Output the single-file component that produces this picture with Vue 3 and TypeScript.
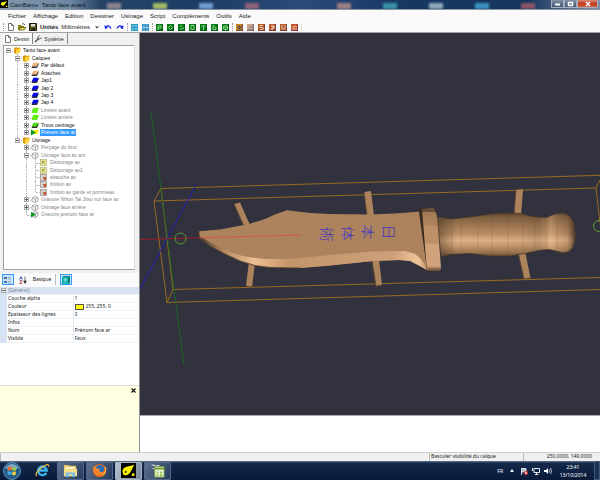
<script setup lang="ts">
import { ref } from 'vue'

interface TreeRow {
  label: string
  level: number
  icon: 'folder' | 'layer' | 'box' | 'contour' | 'mill' | 'engrave' | 'active'
  color?: string
  open?: boolean
  leaf?: boolean
  dim?: boolean
  last?: boolean
  lines?: number[]
}

const menus = ['Fichier', 'Affichage', 'Edition', 'Dessiner', 'Usinage', 'Script', 'Compléments', 'Outils', 'Aide']

const rows: TreeRow[] = [
  { label: 'Tanto face avant', level: 0, icon: 'folder', open: true, last: true },
  { label: 'Calques', level: 1, icon: 'folder', open: true },
  { label: 'Par défaut', level: 2, icon: 'layer', color: '#f0b580', lines: [2] },
  { label: 'Attaches', level: 2, icon: 'layer', color: '#f0b580', lines: [2] },
  { label: 'Jap1', level: 2, icon: 'layer', color: '#0808f0', lines: [2] },
  { label: 'Jap 2', level: 2, icon: 'layer', color: '#0808f0', lines: [2] },
  { label: 'Jap 3', level: 2, icon: 'layer', color: '#0808f0', lines: [2] },
  { label: 'Jap 4', level: 2, icon: 'layer', color: '#0808f0', lines: [2] },
  { label: 'Limites avant', level: 2, icon: 'layer', color: '#62ee18', dim: true, lines: [2] },
  { label: 'Limites arrière', level: 2, icon: 'layer', color: '#62ee18', dim: true, lines: [2] },
  { label: 'Trous centrage', level: 2, icon: 'layer', color: '#52dc1c', lines: [2] },
  { label: 'Prénom face ar', level: 2, icon: 'active', lines: [2], last: true },
  { label: 'Usinage', level: 1, icon: 'folder', open: true, last: true },
  { label: 'Perçage du brut', level: 2, icon: 'box', dim: true },
  { label: 'Usinage face av ant', level: 2, icon: 'box', dim: true, open: true },
  { label: 'Détourage av', level: 3, icon: 'contour', dim: true, leaf: true, lines: [3] },
  { label: 'Détourage av1', level: 3, icon: 'contour', dim: true, leaf: true, lines: [3] },
  { label: 'ebauche av', level: 3, icon: 'mill', dim: true, leaf: true, lines: [3] },
  { label: 'finition av', level: 3, icon: 'mill', dim: true, leaf: true, lines: [3] },
  { label: 'finition av garde et pommeau', level: 3, icon: 'mill', dim: true, leaf: true, last: true, lines: [3] },
  { label: 'Gravure Nihon Tai Jitsu sur face av', level: 2, icon: 'box', dim: true },
  { label: 'Usinage face arrière', level: 2, icon: 'box', dim: true },
  { label: 'Gravure prénom face ar', level: 2, icon: 'engrave', dim: true, leaf: true, last: true },
]
const selected = ref('Prénom face ar')

const properties = ref([
  { id: 'alpha', name: 'Couche alpha', value: '1' },
  { id: 'color', name: 'Couleur', value: '255, 255, 0', swatch: true },
  { id: 'width', name: 'Epaisseur des lignes', value: '0' },
  { id: 'info', name: 'Infos', value: '' },
  { id: 'name', name: 'Nom', value: 'Prénom face ar' },
  { id: 'visible', name: 'Visible', value: 'Faux' },
])

const drawTools = [
  { name: 'Polyligne', d: 'M2 6V2H5V4H2' },
  { name: 'Cercle', d: 'M3.5 1.5L5.5 3.5L3.5 5.5L1.5 3.5Z' },
  { name: 'Points', d: 'M2 2H4M5 3V5M2 5H4' },
  { name: 'Rectangle', d: 'M2 1.5H5V5.5H2Z' },
  { name: 'Texte', d: 'M1.5 2H5.5M3.5 2V6' },
  { name: 'Arc', d: 'M2 1.5V5.5H5L5 4L2 1.5' },
  { name: 'Surface', d: 'M1.5 2.5L3.5 1.5L5.5 2.5V5L3.5 6L1.5 5ZM1.5 2.5L3.5 3.5L5.5 2.5M3.5 3.5V6' },
]
const millTools = [
  { name: 'Contour', bg: '#d48618', d: 'M1 1L6 6M6 1L1 6M3.5 1V6M1 3.5H6', ink: '#62584c' },
  { name: 'Poche', bg: '#c8a48c', d: 'M1 6L6 1V6Z', ink: '#8c8078' },
  { name: 'Perçage', bg: '#b45a28', d: 'M5 1.5H2V3.5H5V5.5H2', ink: '#eec8a8' },
  { name: 'Gravure', bg: '#b85828', d: 'M2 2H5V4H3V6', ink: '#fff0e0' },
  { name: 'Profil 3D', bg: '#b85c30', d: 'M2 1V5H5V1', ink: '#e8c4a0' },
  { name: 'Tournage', bg: '#c4502c', d: 'M1 3H3L4 2L6 3M1 5H6', ink: '#f2d0b8' },
]
</script>

<template>
  <div class="window">
    <header class="titlebar">
      <svg class="app-icon" viewBox="0 0 8 8" aria-hidden="true"><rect width="8" height="8" fill="#000" /><path d="M1 5Q0 2 4 2L7 1L5 4Q4 7 1 5Z" fill="#f6f000" /><circle cx="6.5" cy="6.5" r=".8" fill="#f6f000" /></svg>
      <h1>CamBam+&nbsp; Tanto face avant</h1>
      <div class="glass" aria-hidden="true">
        <i class="g1"></i><i class="g2"></i><i class="g3"></i><i class="g4"></i><i></i><i class="g5"></i><i class="g6"></i><i class="g7"></i><i class="g8"></i><i class="g9"></i>
      </div>
      <div class="caption">
        <button aria-label="Réduire"><svg viewBox="0 0 13 8"><path d="M4 4.500H9" stroke="#fff" stroke-width="2" /></svg></button>
        <button aria-label="Agrandir"><svg viewBox="0 0 13 8"><rect x="4.500" y="2.500" width="4" height="3" fill="none" stroke="#fff" stroke-width="1.500" /></svg></button>
        <button class="close" aria-label="Fermer"><svg viewBox="0 0 20 8"><path d="M8 2L12 6M12 2L8 6" stroke="#fff" stroke-width="1.500" /></svg></button>
      </div>
    </header>

    <nav class="menubar">
      <button v-for="m in menus" :key="m">{{ m }}</button>
    </nav>

    <div class="toolbar">
      <i class="grip"></i>
      <div class="tools file">
        <button aria-label="Nouveau"><svg viewBox="0 0 8 8"><path d="M1.500 .5H4.500L6.500 2.500V7.500H1.500ZM4.500 .5V2.500H6.500" fill="#fff" stroke="#555" stroke-width=".8" /></svg></button>
        <button aria-label="Ouvrir"><svg viewBox="0 0 8 8"><path d="M0 7V2H3L4 3H6V4H8L6 7Z" fill="#8c8410" /><path d="M1 7L2.500 4.500H8L6 7Z" fill="#e8dc58" stroke="#3b3808" stroke-width=".6" /><path d="M4 1Q6 0 7 2" fill="none" stroke="#222" stroke-width=".7" /></svg></button>
        <button aria-label="Enregistrer"><svg viewBox="0 0 8 8"><path d="M.5 .5H7.500V7.500H.5Z" fill="#5c5a18" stroke="#181808" /><rect x="2" y="1" width="4" height="2.500" fill="#ddd" /><rect x="2.500" y="5" width="3.500" height="2.500" fill="#222" /></svg></button>
      </div>
      <label class="units" for="units">Unités</label>
      <div class="combo">
        <select id="units"><option>Millimètres</option><option>Pouces</option></select>
        <svg viewBox="0 0 4 3" aria-hidden="true"><path d="M0 .5H4L2 2.500Z" fill="#333" /></svg>
      </div>
      <div class="tools undo">
        <button aria-label="Annuler"><svg viewBox="0 0 8 8"><path d="M2 4Q4.500 1 7 5.500" fill="none" stroke="#1424e4" stroke-width="1.300" /><path d="M.5 2L1 6L4 5Z" fill="#1424e4" /></svg></button>
        <button aria-label="Rétablir"><svg viewBox="0 0 8 8"><path d="M6 4Q3.500 1 1 5.500" fill="none" stroke="#1424e4" stroke-width="1.300" /><path d="M7.500 2L7 6L4 5Z" fill="#1424e4" /></svg></button>
      </div>
      <i class="grip"></i>
      <div class="tools">
        <button aria-label="Grille"><svg viewBox="0 0 7 7"><rect width="7" height="7" fill="#1490b8" /><path d="M0 2H7M0 5H7M2 0V7M5 0V7" stroke="#b8ecf4" stroke-width=".5" /></svg></button>
        <button aria-label="Accrochage"><svg viewBox="0 0 7 7"><rect width="7" height="7" fill="#2488c0" /><path d="M0 3.500H7M2 0V7M5 0V7" stroke="#d8f2fa" stroke-width=".6" /></svg></button>
      </div>
      <i class="grip"></i>
      <div class="tools">
        <button v-for="t in drawTools" :key="t.name" :aria-label="t.name"><svg viewBox="0 0 7 7"><rect width="7" height="7" fill="#077b18" /><path d="M0 7H7V0" fill="none" stroke="#043c18" /><path :d="t.d" fill="none" stroke="#a8e8a0" stroke-width=".8" /></svg></button>
      </div>
      <i class="grip"></i>
      <div class="tools mill">
        <button v-for="t in millTools" :key="t.name" :aria-label="t.name"><svg viewBox="0 0 7 7"><rect width="7" height="7" :fill="t.bg" /><path d="M0 7H7V0" fill="none" stroke="#3c2448" /><path :d="t.d" fill="none" :stroke="t.ink" stroke-width=".9" /></svg></button>
      </div>
    </div>

    <main class="workspace">
      <aside class="side">
        <div class="tabs" role="tablist">
          <button role="tab" aria-selected="true"><svg viewBox="0 0 8 8"><path d="M1.500 .5H4.500L6.500 2.500V7.500H1.500ZM4.500 .5V2.500H6.500" fill="#fff" stroke="#555" stroke-width=".8" /></svg>Dessin</button>
          <button role="tab" aria-selected="false"><svg viewBox="0 0 8 8"><path d="M1 7L4.500 3.500" stroke="#555" stroke-width="1.500" /><path d="M5.500 .5L4 2V4H6L7.500 2.500" fill="none" stroke="#555" /></svg>Système</button>
        </div>
        <ul class="tree" role="tree">
          <li v-for="row in rows" :key="row.label" role="treeitem" :aria-selected="row.label === selected" :class="{ dim: row.dim }" @click="selected = row.label">
            <i v-for="n in row.level" :key="n" class="guide" :class="{ line: row.lines?.includes(n) }"></i>
            <span class="slot" :class="{ root: row.level === 0, last: row.last }">
              <button v-if="!row.leaf" class="expander" :class="{ open: row.open }" :aria-label="row.open ? 'Replier' : 'Déplier'"></button>
            </span>
            <svg class="node" viewBox="0 0 8 7" aria-hidden="true">
              <template v-if="row.icon === 'folder'"><path d="M1 1L4 0V1L7 .5V5L3 7L1 6Z" fill="#dd9a08" /><path d="M3 2.500L8 1L7 5.500L3 7Z" fill="#ffd43c" /></template>
              <template v-else-if="row.icon === 'layer'"><path d="M2.500 1.500H8L6 6H.5Z" :fill="row.dim ? row.color : '#333'" /><path d="M2.500 .8H7.500L5.600 4.500H.6Z" :fill="row.color" /></template>
              <template v-else-if="row.icon === 'active'"><path d="M3 1H8L6 5H2Z" fill="#f5f000" /><path d="M0 .5L5 3.500L0 6.500Z" fill="#0a9c20" /></template>
              <template v-else-if="row.icon === 'contour'"><rect x=".5" y=".5" width="6" height="6" fill="#e6e48c" stroke="#aaa870" stroke-width=".6" /><path d="M2 2L5 5M5 2Q2 2 2 5" fill="none" stroke="#8b8950" stroke-width=".7" /></template>
              <template v-else-if="row.icon === 'mill'"><rect x=".5" y=".5" width="6" height="6" fill="#d4cecc" stroke="#8a7e7c" stroke-width=".6" /><path d="M3 3H6V6H4Z" fill="#c4562c" /></template>
              <template v-else><path d="M1 2L3.500 .5L7 1.500V5L4.500 6.500L1 5.500ZM1 2L4.500 3L7 1.500M4.500 3V6.500" fill="#f4f4f4" stroke="#929292" stroke-width=".7" /><path v-if="row.icon === 'engrave'" d="M0 1L5 3.500L0 6.500Z" fill="#0a9c20" /></template>
            </svg>
            <span class="label" :class="{ selected: row.label === selected }">{{ row.label }}</span>
          </li>
        </ul>

        <div class="prop-tools">
          <button class="on" aria-label="Par catégorie"><svg viewBox="0 0 8 8"><path d="M0 1H3V3H0ZM0 5H3V7H0Z" fill="#426ca8" /><path d="M4 1.500H7M4 3H7M4 5.500H7M4 7H7" stroke="#7898bc" stroke-width=".7" /></svg></button>
          <button aria-label="Alphabétique"><svg viewBox="0 0 8 8"><path d="M.5 3.500L2 .5L3.500 3.500M1 2.500H3" fill="none" stroke="#3454b8" stroke-width=".8" /><path d="M.5 4.700H3.200L.5 7.500H3.500" fill="none" stroke="#a43838" stroke-width=".8" /><path d="M6 .5V6M4.700 5H7.300L6 7.500Z" fill="#333" stroke="#333" stroke-width=".7" /></svg></button>
          <button class="basic">Basique</button>
          <button class="on help" aria-label="Aide"><svg viewBox="0 0 8 8"><path d="M0 1L2 0H8V7L6 8H0Z" fill="#087c80" /><rect y="1" width="6" height="7" fill="#10b4b0" /><path d="M2 3H4V4.500H3V5.500M3 6.300V7" fill="none" stroke="#e8ffff" stroke-width=".7" /></svg></button>
        </div>
        <table class="props">
          <thead><tr><th class="gutter"><button class="expander open" aria-label="Replier"></button></th><th colspan="2">(Général)</th></tr></thead>
          <tbody>
            <tr v-for="p in properties" :key="p.id">
              <td class="gutter"></td>
              <th scope="row"><label :for="p.id">{{ p.name }}</label></th>
              <td><div class="value"><i v-if="p.swatch" class="swatch"></i><input :id="p.id" v-model="p.value" type="text" /></div></td>
            </tr>
          </tbody>
        </table>
        <div class="hint"><button aria-label="Fermer l'aide"><svg viewBox="0 0 5 5"><path d="M.5 .5L4.500 4.500M4.500 .5L.5 4.500" stroke="#111" stroke-width="1.100" /></svg></button></div>
      </aside>

      <section class="stage">
        <svg class="scene" viewBox="140 33 460 382" preserveAspectRatio="xMidYMid slice" role="img" aria-label="Couteau tanto en 3D">
          <defs>
            <linearGradient id="grip" x1="0" y1="213" x2="0" y2="257" gradientUnits="userSpaceOnUse">
              <stop offset="0" stop-color="#5c4531" /><stop offset=".1" stop-color="#80603f" /><stop offset=".3" stop-color="#a37a55" /><stop offset=".48" stop-color="#bd9067" /><stop offset=".62" stop-color="#e1b386" /><stop offset=".74" stop-color="#ca9b71" /><stop offset=".9" stop-color="#9a734f" /><stop offset="1" stop-color="#57412f" />
            </linearGradient>
            <linearGradient id="shade" x1="437" y1="0" x2="576" y2="0" gradientUnits="userSpaceOnUse">
              <stop offset="0" stop-color="#3c2c1e" stop-opacity=".5" /><stop offset=".14" stop-color="#3c2c1e" stop-opacity="0" /><stop offset=".6" stop-color="#3c2c1e" stop-opacity=".05" /><stop offset=".73" stop-color="#3c2c1e" stop-opacity=".15" /><stop offset=".82" stop-color="#ffd6a8" stop-opacity=".25" /><stop offset=".93" stop-color="#5c4028" stop-opacity=".1" /><stop offset="1" stop-color="#2c2018" stop-opacity=".85" />
            </linearGradient>
            <linearGradient id="bevel" x1="199" y1="0" x2="427" y2="0" gradientUnits="userSpaceOnUse">
              <stop offset="0" stop-color="#49392b" /><stop offset=".12" stop-color="#b98d63" /><stop offset=".24" stop-color="#edbf92" /><stop offset=".4" stop-color="#c39569" /><stop offset=".85" stop-color="#cda078" /><stop offset=".96" stop-color="#f2c69b" /><stop offset="1" stop-color="#c79a70" />
            </linearGradient>
            <linearGradient id="guard" x1="0" y1="208" x2="0" y2="271" gradientUnits="userSpaceOnUse">
              <stop offset="0" stop-color="#66503a" /><stop offset=".06" stop-color="#66503a" /><stop offset=".07" stop-color="#a27a55" /><stop offset=".28" stop-color="#b0865f" /><stop offset=".29" stop-color="#bd9068" /><stop offset=".56" stop-color="#bd9068" /><stop offset=".57" stop-color="#d0a17a" /><stop offset=".92" stop-color="#d0a17a" /><stop offset=".96" stop-color="#967150" /><stop offset="1" stop-color="#604832" />
            </linearGradient>
          </defs>
          <g class="stock">
            <path d="M600 175.300L161 188.500L154 201L596 188L600 180M154 201L167 302.500L600 289.500M161 188.500L173 289.500L600 277.500M173 289.500L167 302.500M596 188L600 223" />
          </g>
          <path class="axis-y" d="M151 112L184 366" />
          <path class="axis-z" d="M196 185L140 289" />
          <g class="tabs-3d">
            <path d="M234 204L240 202.500L250 225L244 227Z" /><path d="M249 261L255 263L252 287L246 286Z" />
            <path d="M364 192L371 191L374 216L367 216Z" /><path d="M372 260L379 259L382 285L376 286.500Z" />
            <path d="M516 190L523 189L521 216L514 216Z" /><path d="M518 251L525 251L530.500 278L524 279.500Z" />
          </g>
          <path class="tab-edge" d="M234 204L244 226M246 286L252 287M364 192L367 215M376 286L382 285M372 261L376 286M516 190L514 213M518 253L524 279L530.500 278" />
          <path d="M199 231.300L220 229.500L249 224L265 219L275 214.500L287 210.200L310 213L330 214L370 214.500L395 213.500L421 211.500L427 270L418 265L410 261L400 260L373 261L330 265.500L300 268L270 267.500L255 265.500L240 261L225 254L210 246L199 238Z" fill="#ac835c" />
          <path d="M199 236L215 245L232 253L245 256.500L265 259L290 259L330 255L373 251.500L405 251L415 254L421 259L426 267L427 270L418 265L410 261L400 260L373 261L330 265.500L300 268L270 267.500L255 265.500L240 261L225 254L210 246L199 238Z" fill="url(#bevel)" />
          <path d="M199 231.300V238L210 246L225 254L240 261L255 265.500L270 267.500L300 268" fill="none" stroke="#4b3927" stroke-width=".8" />
          <path d="M437 217L452 219L470 217L490 214L505 213L520 213.500L535 217L546 217.500L555 214L563 213Q572 215 574 224Q577 236 573 247Q570 253 562 252.500L550 249.500L541 250L525 253.500L510 256L490 256L470 253.500L450 254.500L441 257Z" fill="url(#grip)" />
          <path d="M437 217L452 219L470 217L490 214L505 213L520 213.500L535 217L546 217.500L555 214L563 213Q572 215 574 224Q577 236 573 247Q570 253 562 252.500L550 249.500L541 250L525 253.500L510 256L490 256L470 253.500L450 254.500L441 257Z" fill="url(#shade)" stroke="#493625" stroke-width=".7" />
          <path class="facets" d="M452 222V252M461 221V252M478 218V252M492 217V254M508 216V254M523 217V252M535 219V250M546 220V248M557 217V250M565 216V250" />
          <path d="M418.500 209L434 207L436 211L427 271L426 262Z" fill="#3b2c20" />
          <path d="M422 209L434 207.500L437 216L441 268L440 271H427Z" fill="url(#guard)" />
          <path d="M200 237.800L301 235" stroke="#d85243" stroke-width=".9" />
          <path d="M140 239.500L200 237.800" stroke="#a31b24" stroke-width=".9" />
          <circle class="origin" cx="180.500" cy="238.500" r="5.500" /><circle class="origin" cx="599" cy="226" r="5.500" />
          <g class="kanji">
            <text transform="translate(389.500 232) rotate(92)">日</text>
            <text transform="translate(368.500 232) rotate(92)">本</text>
            <text transform="translate(348.500 233.500) rotate(92)">体</text>
            <text transform="translate(327.500 234.500) rotate(92)">術</text>
          </g>
        </svg>
        <div class="log"></div>
      </section>
    </main>

    <footer class="status">
      <span class="message"></span><span class="tip">Basculer visibilité du calque</span><span class="coords">250.0000, 149.0000</span>
    </footer>

    <div class="taskbar">
      <button class="start" aria-label="Démarrer"><svg viewBox="0 0 18 18"><circle cx="9" cy="9" r="8.500" fill="#235c88" stroke="#6fa5c4" stroke-width=".8" /><path d="M2 6Q9 -2 16 6Q9 9 2 6" fill="#b3d8e6" opacity=".6" /><path d="M5 5Q7 4 8.500 5V8.500Q7 8 4.500 8.700Z" fill="#ee6a2c" /><path d="M9.300 5Q11 6 13.500 5L13 8.500Q11 9 9.300 8.500Z" fill="#95cc46" /><path d="M4.500 9.500Q7 8.800 8.500 9.500V13Q7 12 4.500 13Z" fill="#45a8e8" /><path d="M9.300 9.500Q11 10 13 9.500L12.500 13Q11 13.500 9.300 13Z" fill="#f7cf3e" /></svg></button>
      <button class="task plain" aria-label="Internet Explorer"><svg viewBox="0 0 16 16"><path d="M12 10.500A4.600 4.600 0 1 1 12.500 8H4" fill="none" stroke="#3eb4ef" stroke-width="2.500" /><path d="M2 14Q-1 11 7 5Q15 -1 14.500 4" fill="none" stroke="#f2bd3d" stroke-width="1.200" /></svg></button>
      <button class="task" aria-label="Explorateur"><svg viewBox="0 0 16 16"><path d="M1 2H6L7 3H14V14H1Z" fill="#e3bd5b" /><path d="M2 4H13V8H2Z" fill="#fff6c8" /><path d="M1 6H15V14H1Z" fill="#f4dc8b" /><path d="M3 10H13V15H10V12H6V15H3Z" fill="#79bee4" /></svg></button>
      <button class="task" aria-label="Firefox"><svg viewBox="0 0 16 16"><circle cx="8" cy="8" r="7" fill="#e8661b" /><circle cx="8.500" cy="6.500" r="4.500" fill="#2c6cb4" /><path d="M1.500 4Q4 2 5 6Q9 5 8 8Q8 11 13 9Q11 15 5 13Q0 10 1.500 4Z" fill="#f3862c" /><path d="M14 4Q16 9 12 13" fill="none" stroke="#f7bb34" stroke-width="1.200" /></svg></button>
      <button class="task current" aria-label="CamBam"><svg viewBox="0 0 16 16"><rect width="16" height="16" fill="#000" /><path d="M2 11Q0 6 6 4L14 2L11 8Q8 14 4 13Q2 13 2 11Z" fill="#f8f000" /><circle cx="5" cy="9.500" r="1" fill="#111" /><circle cx="13" cy="12.500" r="1.500" fill="#f8f000" /></svg></button>
      <button class="task" aria-label="LibreOffice"><svg viewBox="0 0 16 16"><path d="M1 2Q4 1 6 3Q8 1 11 3L8 4Q4 3 1 2ZM2 6Q5 4 7 7" fill="#dce6ec" /><rect x="5" y="4" width="10" height="11" fill="#f0f6e4" stroke="#739b33" /><path d="M5 6H15" stroke="#739b33" stroke-width="2" /><path d="M7 9H9V11H7ZM10.500 9H13V11H10.500ZM7 12H9V14H7ZM10.500 12H13V14H10.500Z" fill="#8bbd36" /></svg></button>
      <div class="tray">
        <span class="lang">FR</span>
        <svg class="up" viewBox="0 0 4 3" aria-hidden="true"><path d="M0 3L2 0L4 3Z" fill="#fff" /></svg>
        <svg viewBox="0 0 8 8" aria-hidden="true"><path d="M1.500 1V8M2 1.500H6V5H2" fill="#aebac8" stroke="#fff" stroke-width=".8" /><circle cx="6" cy="6" r="2" fill="#e52c25" /><path d="M5 5L7 7M7 5L5 7" stroke="#fff" stroke-width=".6" /></svg>
        <svg viewBox="0 0 8 8" aria-hidden="true"><path d="M2 1.500H7.500V5.500H2ZM4.500 5.500V7.500M3 7.500H6.500M.5 1V4" fill="none" stroke="#fff" stroke-width=".9" /></svg>
        <svg viewBox="0 0 8 8" aria-hidden="true"><path d="M0 3H2L4 1V7L2 5H0Z" fill="#fff" /><path d="M5 2.500Q6 4 5 5.500M6.500 1Q8.500 4 6.500 7" fill="none" stroke="#fff" stroke-width=".7" /></svg>
        <div class="clock"><time>23:41</time><time>13/10/2014</time></div>
        <button class="desktop" aria-label="Afficher le bureau"></button>
      </div>
    </div>
  </div>
</template>

<style>
body { margin: 0; background: #f0f0f0; }
</style>

<style scoped>
* { box-sizing: border-box; }
.window { height: 100vh; display: flex; flex-direction: column; overflow: hidden; background: #f0f0f0; color: #222; font: 6px/8px "Liberation Sans", Arial, sans-serif; }
button { margin: 0; padding: 0; border: 0; background: none; color: inherit; font: inherit; display: flex; align-items: center; justify-content: center; }
svg { display: block; flex: none; }

.titlebar { position: relative; flex: 0 0 10px; display: flex; align-items: flex-start; background: linear-gradient(90deg, #8096ac 0, #6f88a3 70px, #274467 100px, #1d3b64 200px, #2a4a78 50%, #173763 68%, #17365e 88%, #8092a8 100%); border-bottom: 1px solid #8b96a4; }
.app-icon { width: 8px; height: 8px; z-index: 1; }
h1 { margin: 1px 0 0 2px; font: 6px/8px "Liberation Sans", Arial, sans-serif; color: #101820; z-index: 1; }
.glass { position: absolute; inset: 0 49px 0 91px; display: grid; grid-template-columns: repeat(10, 1fr); align-items: end; justify-items: center; overflow: hidden; }
.glass i { width: 14px; height: 6px; filter: blur(1px); }
.g1 { background: #8f8291; } .g2 { background: #a1bb66; } .g3 { background: #6c9cd0; } .g4 { background: #8d6278; }
.g5 { background: #9e7f83; } .g6 { background: #3992a8; } .g7 { background: #8fa6b8; } .g8 { background: #3b92bf; } .g9 { background: #8a5468; }
.caption { margin-left: auto; margin-right: 2px; display: flex; z-index: 1; }
.caption button { width: 13px; height: 8px; border: 1px solid #a3afbe; border-top: 0; background: linear-gradient(#8291a5, #3f5572); }
.caption svg { width: 13px; height: 8px; }
.caption .close { width: 21px; border-radius: 0 0 2px 0; background: linear-gradient(#d98d7b, #c23c20 50%, #d25c3a); }
.caption .close svg { width: 20px; }

.menubar { flex: 0 0 12px; display: flex; align-items: center; gap: 7px; padding-left: 8px; background: #fafafa; }
.toolbar { flex: 0 0 11px; display: flex; align-items: center; gap: 3px; padding-left: 3px; background: #fafafa; border-bottom: 1px solid #a4a4a4; }
.grip { width: 1px; height: 8px; border-left: 1px dotted #999; }
.tools { display: flex; gap: 4px; }
.tools svg { width: 7px; height: 7px; }
.file { gap: 3px; }
.file svg, .undo svg { width: 8px; height: 8px; }
.mill { padding-right: 3px; border-right: 1px solid #ddd; }
.units { font-weight: bold; }
.combo { display: flex; align-items: center; width: 38px; background: #fff; }
.combo select { flex: 1; min-width: 0; height: 8px; padding: 0; border: 0; appearance: none; background: transparent; color: #222; font: 6px/8px "Liberation Sans", Arial, sans-serif; }
.combo svg { width: 4px; height: 3px; }
.undo { padding-left: 2px; }

.workspace { flex: 1; min-height: 0; display: flex; }
.side { flex: 0 0 140px; display: flex; flex-direction: column; min-height: 0; border-right: 1px solid #8c8c8c; background: #f0f0f0; }
.tabs { flex: 0 0 11px; display: flex; padding-left: 3px; font-size: 5px; }
.tabs button { gap: 2px; padding: 0 3px 0 1px; border-right: 1px solid #888; }
.tabs button:first-child { background: #fafafa; }
.tabs svg { width: 8px; height: 8px; }
.tree { flex: 1; margin: 1px 4px 3px 3px; padding: 1px 0 50px; list-style: none; border: 1px solid #a0a0a0; border-right-color: #ddd; background: #fff; display: grid; grid-template-rows: repeat(23, minmax(0, 1fr)); font-size: 5px; line-height: 7px; min-height: 0; }
.tree li { display: flex; align-items: center; padding-left: 2px; min-height: 0; white-space: nowrap; }
.guide { position: relative; width: 9px; align-self: stretch; flex: none; }
.guide.line::before, .slot::before { content: ""; position: absolute; left: 2px; top: 0; bottom: 0; border-left: 1px dotted #b4b4b4; }
.slot { position: relative; width: 7px; align-self: stretch; flex: none; display: flex; align-items: center; }
.slot::after { content: ""; position: absolute; left: 3px; right: 0; top: 50%; border-top: 1px dotted #b4b4b4; }
.slot.last::before { bottom: 50%; }
.slot.root::before { display: none; }
.expander { position: relative; z-index: 1; width: 5px; height: 5px; border: 1px solid #a8a8a8; background: linear-gradient(#555, #555) center / 3px 1px no-repeat, linear-gradient(#777, #777) center / 1px 3px no-repeat, #fff; }
.expander.open { background: linear-gradient(#555, #555) center / 3px 1px no-repeat, #fff; }
.node { width: 8px; height: 7px; }
.label { margin-left: 1px; padding: 0 1px; color: #111; }
.dim .label { color: #858585; }
.label.selected { background: #3399ff; color: #fff; }

.prop-tools { flex: 0 0 14px; display: flex; align-items: center; gap: 3px; padding: 1px 2px; background: #fafafa; }
.prop-tools button { height: 11px; width: 12px; }
.prop-tools svg { width: 8px; height: 8px; }
.prop-tools .on { border: 1px solid #3399ff; background: #cce5fb; }
.prop-tools .basic { width: 24px; border-right: 1px solid #bbb; padding-right: 3px; margin-right: 1px; font: 5px/7px "Noto Sans", "Open Sans", sans-serif; }
.props { border-collapse: collapse; width: 100%; table-layout: fixed; background: #fff; font: 5px/7px "Noto Sans", "Open Sans", sans-serif; }
.props tr { height: 8px; }
.props th, .props td { height: 8px; padding: 0 0 0 1px; text-align: left; font-weight: normal; border-bottom: 1px solid #eef2f8; }
.props thead th { background: #d7e3f2; color: #7b8794; }
.props .gutter { width: 7px; background: #d7e3f2; border-color: #d7e3f2; }
.props tbody th { width: 70px; border-right: 1px solid #e0e6ee; }
.value { display: flex; align-items: center; gap: 2px; height: 7px; }
.value input { flex: 1; min-width: 0; width: 100%; height: 7px; padding: 0; border: 0; background: none; color: #222; font: inherit; }
.swatch { flex: none; width: 9px; height: 6px; border: 1px solid #555; background: #ff0; }
.hint { flex: 0 0 67px; margin-top: 42px; display: flex; justify-content: flex-end; align-items: flex-start; padding: 2px 3px; background: #ffffe1; border-top: 1px solid #ddd; box-shadow: 0 -42px 0 #fff; }
.hint svg { width: 5px; height: 5px; }

.stage { flex: 1; min-width: 0; display: flex; flex-direction: column; background: #32323e; }
.scene { flex: 1; min-height: 0; width: 100%; }
.log { flex: 0 0 37px; background: #fff; border-top: 1px solid #aaa; }
.stock { fill: none; stroke: #b27815; stroke-width: .8; }
.axis-y { stroke: #176b22; stroke-width: .9; }
.axis-z { stroke: #1c1cc0; stroke-width: .9; }
.tabs-3d { fill: #ac835c; }
.tab-edge { fill: none; stroke: #5b442f; stroke-width: .9; }
.facets { fill: none; stroke: #6b4e35; stroke-width: .5; opacity: .35; }
.origin { fill: none; stroke: #5d9e2d; stroke-width: 1; }
.kanji { fill: #3d35c4; font: 300 15px "Noto Sans CJK JP", sans-serif; text-anchor: middle; dominant-baseline: central; }

.status { flex: 0 0 9px; display: flex; gap: 2px; background: #f0f0f0; border-top: 1px solid #d0d0d0; font: 5px/7px "Noto Sans", "Open Sans", sans-serif; }
.status span { border-left: 1px solid #bbb; padding-left: 1px; }
.message { flex: 1; }
.tip { width: 92px; }
.status .coords { width: 77px; text-align: right; padding-right: 8px; }

.taskbar { flex: 0 0 19px; display: flex; align-items: center; gap: 2px; padding-left: 3px; background: linear-gradient(#6a7e98 0, #15294a 2px, #0e2143 60%, #0a1a38); color: #fff; }
.start svg { width: 18px; height: 18px; }
.start { margin-right: 6px; }
.task { width: 27px; height: 18px; border: 1px solid #53688a; background: linear-gradient(120deg, #5d708c, #263c60); border-radius: 1px; }
.task.plain { border-color: transparent; background: none; width: 26px; }
.task.current { background: linear-gradient(120deg, #b8c2cf, #74859d); border-color: #a8b4c6; }
.task svg { width: 15px; height: 15px; }
.tray { margin-left: auto; height: 100%; display: flex; align-items: center; gap: 4px; font: 5px/8px "Noto Sans", "Open Sans", sans-serif; }
.tray svg { width: 8px; height: 8px; }
.tray .up { width: 4px; height: 3px; margin: 0 2px 0 3px; }
.clock { width: 34px; display: flex; flex-direction: column; align-items: center; }
.desktop { width: 6px; height: 100%; border: 1px solid #425a7e; background: #1b3152; }
</style>
